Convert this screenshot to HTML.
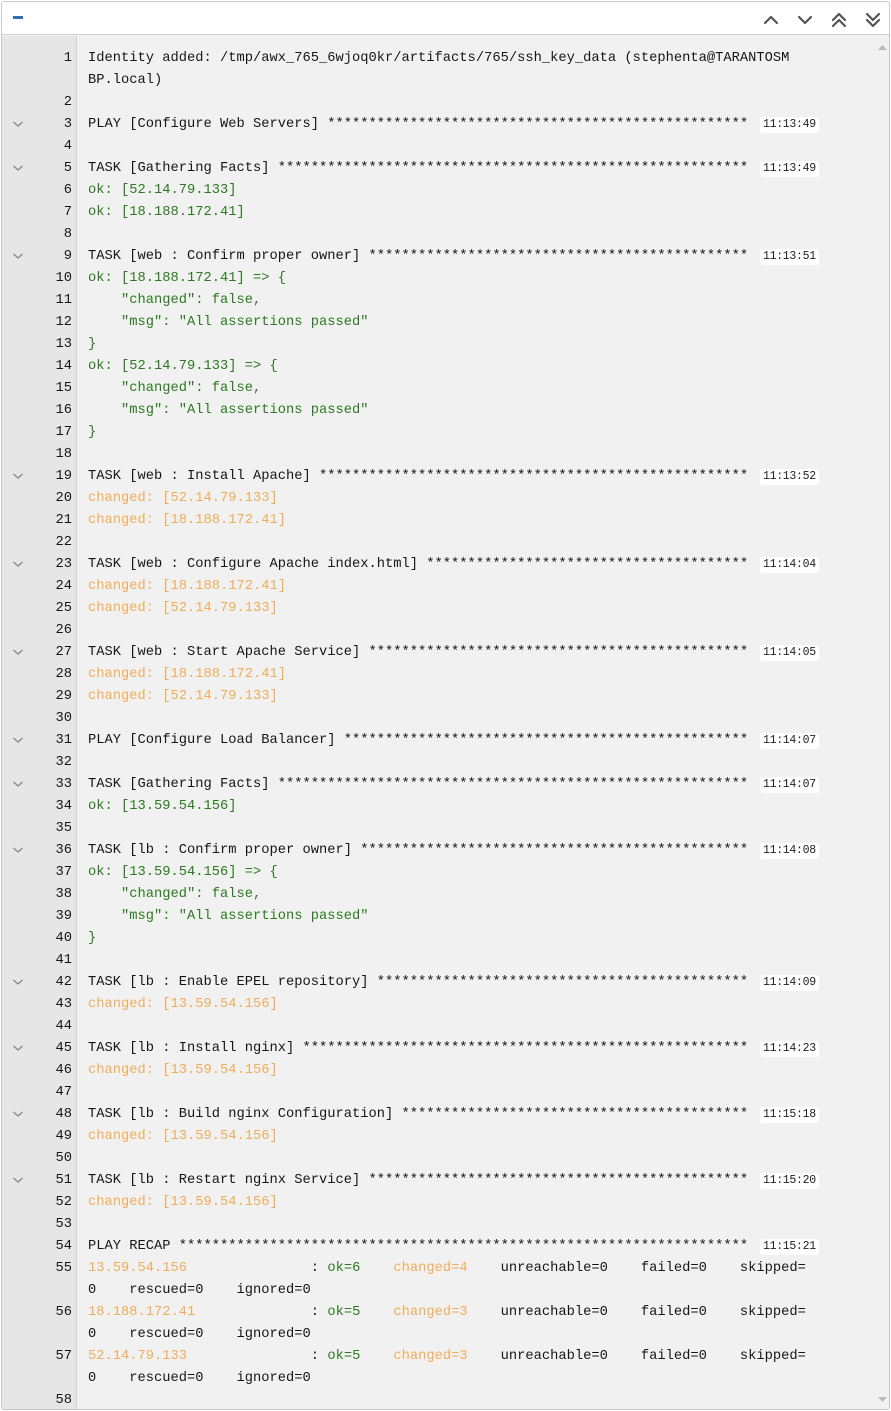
<!DOCTYPE html>
<html><head><meta charset="utf-8"><style>
*{margin:0;padding:0;box-sizing:border-box}
body{width:891px;height:1411px;background:#fff;overflow:hidden;font-family:"Liberation Mono",monospace;}
.wrap{position:absolute;left:1px;top:1px;width:889px;height:1409px;border:1px solid #c8c8c8;border-radius:3px;overflow:hidden;background:#f1f1f1}
.hdr{position:absolute;left:0;top:0;right:0;height:33px;background:#fff;border-bottom:1px solid #d0d0d0}
.minus{position:absolute;left:11px;top:14px;width:10px;height:3px;background:#2f6fb5}
.gut{position:absolute;left:0;top:34px;width:75px;bottom:0;background:#e6e6e6;border-right:1px solid #d2d2d2}
.body{position:absolute;left:0;top:46px;right:0}
.r{position:relative;height:22px;line-height:22px;font-size:13.75px;color:#161616;white-space:pre}
.n{position:absolute;left:0;width:70px;text-align:right;color:#161616}
.f{position:absolute;left:10px;top:6px;width:12px;height:8px}
.t{position:absolute;left:86px}
.ts{position:absolute;left:758px;top:3px;height:16px;line-height:16px;background:#fff;border-radius:3px;padding:0 3px;font-size:11.5px;color:#222;letter-spacing:-0.3px}
.g{color:#2b7a1f}.o{color:#f0ad5a}
.sb{position:absolute;right:0;top:34px;width:13px;bottom:0;background:#f1f1f1}
</style></head><body><div class="wrap">
<div class="hdr"><div class="minus"></div>
<svg style="position:absolute;left:760px;top:10px" width="120" height="16" viewBox="0 0 120 16" fill="none" stroke="#555" stroke-width="2.2" stroke-linecap="round" stroke-linejoin="round">
<path d="M3 11 L9 5 L15 11"/><path d="M37 5 L43 11 L49 5"/>
<path d="M71 8 L77 2 L83 8 M71 14 L77 8 L83 14"/><path d="M105 2 L111 8 L117 2 M105 8 L111 14 L117 8"/></svg></div>
<div class="gut"></div>
<div class="sb"><svg style="position:absolute;left:2px;top:8px" width="9" height="6"><path d="M0 6 L4.5 1 L9 6Z" fill="#bbb"/></svg><svg style="position:absolute;left:2px;bottom:6px" width="9" height="6"><path d="M0 0 L4.5 5 L9 0Z" fill="#bbb"/></svg></div>
<svg width="0" height="0" style="position:absolute"><defs><symbol id="cv" viewBox="0 0 12 8"><path d="M1.5 2 L6 6 L10.5 2" fill="none" stroke="#888" stroke-width="1.3"/></symbol></defs></svg>
<div class="body">
<div class="r"><span class="n">1</span><span class="t">Identity added: /tmp/awx_765_6wjoq0kr/artifacts/765/ssh_key_data (stephenta@TARANTOSM</span></div>
<div class="r"><span class="t">BP.local)</span></div>
<div class="r"><span class="n">2</span></div>
<div class="r"><svg class="f"><use href="#cv"/></svg><span class="n">3</span><span class="t">PLAY [Configure Web Servers] ***************************************************</span><span class="ts">11:13:49</span></div>
<div class="r"><span class="n">4</span></div>
<div class="r"><svg class="f"><use href="#cv"/></svg><span class="n">5</span><span class="t">TASK [Gathering Facts] *********************************************************</span><span class="ts">11:13:49</span></div>
<div class="r"><span class="n">6</span><span class="t g">ok: [52.14.79.133]</span></div>
<div class="r"><span class="n">7</span><span class="t g">ok: [18.188.172.41]</span></div>
<div class="r"><span class="n">8</span></div>
<div class="r"><svg class="f"><use href="#cv"/></svg><span class="n">9</span><span class="t">TASK [web : Confirm proper owner] **********************************************</span><span class="ts">11:13:51</span></div>
<div class="r"><span class="n">10</span><span class="t g">ok: [18.188.172.41] => {</span></div>
<div class="r"><span class="n">11</span><span class="t g">    "changed": false,</span></div>
<div class="r"><span class="n">12</span><span class="t g">    "msg": "All assertions passed"</span></div>
<div class="r"><span class="n">13</span><span class="t g">}</span></div>
<div class="r"><span class="n">14</span><span class="t g">ok: [52.14.79.133] => {</span></div>
<div class="r"><span class="n">15</span><span class="t g">    "changed": false,</span></div>
<div class="r"><span class="n">16</span><span class="t g">    "msg": "All assertions passed"</span></div>
<div class="r"><span class="n">17</span><span class="t g">}</span></div>
<div class="r"><span class="n">18</span></div>
<div class="r"><svg class="f"><use href="#cv"/></svg><span class="n">19</span><span class="t">TASK [web : Install Apache] ****************************************************</span><span class="ts">11:13:52</span></div>
<div class="r"><span class="n">20</span><span class="t o">changed: [52.14.79.133]</span></div>
<div class="r"><span class="n">21</span><span class="t o">changed: [18.188.172.41]</span></div>
<div class="r"><span class="n">22</span></div>
<div class="r"><svg class="f"><use href="#cv"/></svg><span class="n">23</span><span class="t">TASK [web : Configure Apache index.html] ***************************************</span><span class="ts">11:14:04</span></div>
<div class="r"><span class="n">24</span><span class="t o">changed: [18.188.172.41]</span></div>
<div class="r"><span class="n">25</span><span class="t o">changed: [52.14.79.133]</span></div>
<div class="r"><span class="n">26</span></div>
<div class="r"><svg class="f"><use href="#cv"/></svg><span class="n">27</span><span class="t">TASK [web : Start Apache Service] **********************************************</span><span class="ts">11:14:05</span></div>
<div class="r"><span class="n">28</span><span class="t o">changed: [18.188.172.41]</span></div>
<div class="r"><span class="n">29</span><span class="t o">changed: [52.14.79.133]</span></div>
<div class="r"><span class="n">30</span></div>
<div class="r"><svg class="f"><use href="#cv"/></svg><span class="n">31</span><span class="t">PLAY [Configure Load Balancer] *************************************************</span><span class="ts">11:14:07</span></div>
<div class="r"><span class="n">32</span></div>
<div class="r"><svg class="f"><use href="#cv"/></svg><span class="n">33</span><span class="t">TASK [Gathering Facts] *********************************************************</span><span class="ts">11:14:07</span></div>
<div class="r"><span class="n">34</span><span class="t g">ok: [13.59.54.156]</span></div>
<div class="r"><span class="n">35</span></div>
<div class="r"><svg class="f"><use href="#cv"/></svg><span class="n">36</span><span class="t">TASK [lb : Confirm proper owner] ***********************************************</span><span class="ts">11:14:08</span></div>
<div class="r"><span class="n">37</span><span class="t g">ok: [13.59.54.156] => {</span></div>
<div class="r"><span class="n">38</span><span class="t g">    "changed": false,</span></div>
<div class="r"><span class="n">39</span><span class="t g">    "msg": "All assertions passed"</span></div>
<div class="r"><span class="n">40</span><span class="t g">}</span></div>
<div class="r"><span class="n">41</span></div>
<div class="r"><svg class="f"><use href="#cv"/></svg><span class="n">42</span><span class="t">TASK [lb : Enable EPEL repository] *********************************************</span><span class="ts">11:14:09</span></div>
<div class="r"><span class="n">43</span><span class="t o">changed: [13.59.54.156]</span></div>
<div class="r"><span class="n">44</span></div>
<div class="r"><svg class="f"><use href="#cv"/></svg><span class="n">45</span><span class="t">TASK [lb : Install nginx] ******************************************************</span><span class="ts">11:14:23</span></div>
<div class="r"><span class="n">46</span><span class="t o">changed: [13.59.54.156]</span></div>
<div class="r"><span class="n">47</span></div>
<div class="r"><svg class="f"><use href="#cv"/></svg><span class="n">48</span><span class="t">TASK [lb : Build nginx Configuration] ******************************************</span><span class="ts">11:15:18</span></div>
<div class="r"><span class="n">49</span><span class="t o">changed: [13.59.54.156]</span></div>
<div class="r"><span class="n">50</span></div>
<div class="r"><svg class="f"><use href="#cv"/></svg><span class="n">51</span><span class="t">TASK [lb : Restart nginx Service] **********************************************</span><span class="ts">11:15:20</span></div>
<div class="r"><span class="n">52</span><span class="t o">changed: [13.59.54.156]</span></div>
<div class="r"><span class="n">53</span></div>
<div class="r"><span class="n">54</span><span class="t">PLAY RECAP *********************************************************************</span><span class="ts">11:15:21</span></div>
<div class="r"><span class="n">55</span><span class="t"><span class="o">13.59.54.156</span>               : <span class="g">ok=6</span>    <span class="o">changed=4</span>    unreachable=0    failed=0    skipped=</span></div>
<div class="r"><span class="t">0    rescued=0    ignored=0</span></div>
<div class="r"><span class="n">56</span><span class="t"><span class="o">18.188.172.41</span>              : <span class="g">ok=5</span>    <span class="o">changed=3</span>    unreachable=0    failed=0    skipped=</span></div>
<div class="r"><span class="t">0    rescued=0    ignored=0</span></div>
<div class="r"><span class="n">57</span><span class="t"><span class="o">52.14.79.133</span>               : <span class="g">ok=5</span>    <span class="o">changed=3</span>    unreachable=0    failed=0    skipped=</span></div>
<div class="r"><span class="t">0    rescued=0    ignored=0</span></div>
<div class="r"><span class="n">58</span></div>
</div></div></body></html>
